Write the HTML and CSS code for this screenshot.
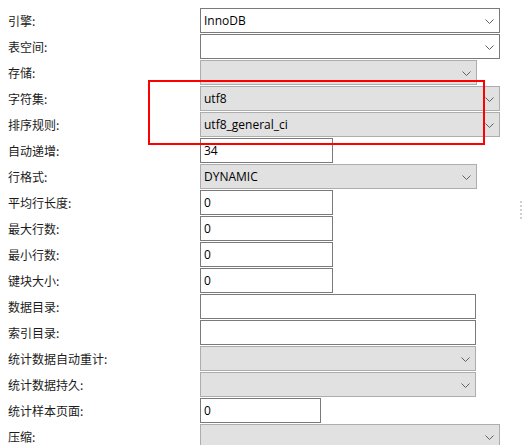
FILE: index.html
```html
<!DOCTYPE html>
<html lang="zh-CN">
<head>
<meta charset="utf-8">
<title>表选项</title>
<link rel="stylesheet" href="styles.css">
</head>
<body>
<div class="page">
  <div class="form">
    <label class="lbl">引擎:</label>
    <div class="ctl select w300"><span class="val">InnoDB</span><svg class="chev" width="9" height="5" viewBox="0 0 9 5"><polyline points="0.5,0.5 4.5,4.5 8.5,0.5"/></svg></div>

    <label class="lbl">表空间:</label>
    <div class="ctl select w300"><span class="val"></span><svg class="chev" width="9" height="5" viewBox="0 0 9 5"><polyline points="0.5,0.5 4.5,4.5 8.5,0.5"/></svg></div>

    <label class="lbl">存储:</label>
    <div class="ctl select dis w277"><span class="val"></span><svg class="chev" width="9" height="5" viewBox="0 0 9 5"><polyline points="0.5,0.5 4.5,4.5 8.5,0.5"/></svg></div>

    <label class="lbl">字符集:</label>
    <div class="ctl select dis w300"><span class="val">utf8</span><svg class="chev" width="9" height="5" viewBox="0 0 9 5"><polyline points="0.5,0.5 4.5,4.5 8.5,0.5"/></svg></div>

    <label class="lbl">排序规则:</label>
    <div class="ctl select dis w300"><span class="val">utf8_general_ci</span><svg class="chev" width="9" height="5" viewBox="0 0 9 5"><polyline points="0.5,0.5 4.5,4.5 8.5,0.5"/></svg></div>

    <label class="lbl">自动递增:</label>
    <div class="ctl input w133"><span class="val">34</span></div>

    <label class="lbl">行格式:</label>
    <div class="ctl select dis w277"><span class="val">DYNAMIC</span><svg class="chev" width="9" height="5" viewBox="0 0 9 5"><polyline points="0.5,0.5 4.5,4.5 8.5,0.5"/></svg></div>

    <label class="lbl">平均行长度:</label>
    <div class="ctl input w133"><span class="val">0</span></div>

    <label class="lbl">最大行数:</label>
    <div class="ctl input w133"><span class="val">0</span></div>

    <label class="lbl">最小行数:</label>
    <div class="ctl input w133"><span class="val">0</span></div>

    <label class="lbl">键块大小:</label>
    <div class="ctl input w133"><span class="val">0</span></div>

    <label class="lbl">数据目录:</label>
    <div class="ctl input w276"><span class="val"></span></div>

    <label class="lbl">索引目录:</label>
    <div class="ctl input w276"><span class="val"></span></div>

    <label class="lbl">统计数据自动重计:</label>
    <div class="ctl select dis w276"><span class="val"></span><svg class="chev" width="9" height="5" viewBox="0 0 9 5"><polyline points="0.5,0.5 4.5,4.5 8.5,0.5"/></svg></div>

    <label class="lbl">统计数据持久:</label>
    <div class="ctl select dis w276"><span class="val"></span><svg class="chev" width="9" height="5" viewBox="0 0 9 5"><polyline points="0.5,0.5 4.5,4.5 8.5,0.5"/></svg></div>

    <label class="lbl">统计样本页面:</label>
    <div class="ctl input w121"><span class="val">0</span></div>

    <label class="lbl">压缩:</label>
    <div class="ctl select dis w300"><span class="val"></span><svg class="chev" width="9" height="5" viewBox="0 0 9 5"><polyline points="0.5,0.5 4.5,4.5 8.5,0.5"/></svg></div>
  </div>

  <div class="highlight"></div>

  <div class="grip">
    <span></span><span></span><span></span><span></span><span></span>
  </div>
</div>
</body>
</html>
```

FILE: styles.css
```css
html, body {
  margin: 0;
  padding: 0;
  background: #ffffff;
}

body {
  width: 524px;
  height: 445px;
  overflow: hidden;
  font-family: "Noto Sans", "Noto Sans CJK SC", sans-serif;
  font-size: 12px;
  color: #1a1a1a;
}

.page {
  position: relative;
  width: 524px;
  height: 445px;
}

.form {
  display: grid;
  grid-template-columns: 192px auto;
  grid-auto-rows: 25px;
  row-gap: 1px;
  padding: 8px 0 0 8px;
  justify-items: start;
}

.lbl {
  display: flex;
  align-items: center;
  height: 25px;
  font-family: "Noto Sans CJK SC", sans-serif;
  font-size: 12px;
  color: #1b1b1b;
  white-space: nowrap;
}

.ctl {
  box-sizing: border-box;
  height: 25px;
  display: flex;
  align-items: center;
  justify-content: space-between;
  padding: 0 5px 0 3px;
  border: 1px solid #7a7a7a;
  background: #ffffff;
  color: #000000;
}

.ctl .val {
  font-family: "Open Sans", "Noto Sans CJK SC", sans-serif;
  font-size: 12px;
  line-height: 16px;
  white-space: nowrap;
}

.select.dis {
  background: #e1e1e1;
  border-color: #adadad;
}

.chev {
  flex: none;
  margin-top: 1px;
}

.chev polyline {
  fill: none;
  stroke: #606060;
  stroke-width: 1;
}

.w300 { width: 300px; }
.w277 { width: 277px; }
.w276 { width: 276px; }
.w133 { width: 133px; }
.w121 { width: 121px; }

.highlight {
  position: absolute;
  left: 148px;
  top: 80px;
  width: 337px;
  height: 65px;
  box-sizing: border-box;
  border: 2px solid #ff0000;
}

.grip {
  position: absolute;
  left: 520px;
  top: 201px;
  display: flex;
  flex-direction: column;
  gap: 2px;
}

.grip span {
  width: 2px;
  height: 2px;
  background: #cfcfcf;
}
```
